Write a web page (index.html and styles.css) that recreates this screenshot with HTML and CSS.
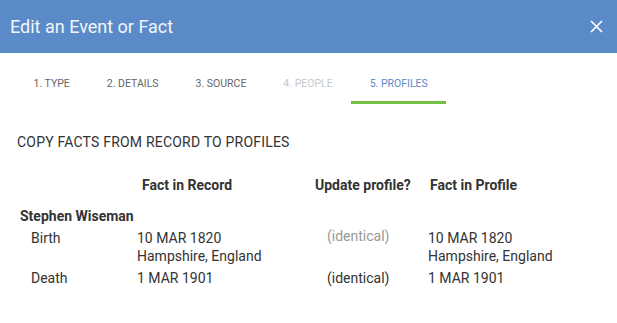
FILE: index.html
```html
<!DOCTYPE html>
<html lang="en">
  <head>
    <meta charset="UTF-8" />
    <meta name="viewport" content="width=device-width, initial-scale=1.0" />
    <title>Edit an Event or Fact</title>
    <link rel="stylesheet" href="styles.css">
  </head>
  <body>
    <div class="dialog">
      <div class="header">
        <h1>Edit an Event or Fact</h1>
        <button class="close" aria-label="Close">
          <svg width="13" height="13" viewBox="0 0 13 13">
            <path d="M1 1L12 12M12 1L1 12" stroke="#fff" stroke-width="1.7" fill="none" />
          </svg>
        </button>
      </div>

      <div class="tabs">
        <div class="tab">1. TYPE</div>
        <div class="tab">2. DETAILS</div>
        <div class="tab">3. SOURCE</div>
        <div class="tab disabled">4. PEOPLE</div>
        <div class="tab active">5. PROFILES</div>
      </div>

      <div class="content">
        <h2>COPY FACTS FROM RECORD TO PROFILES</h2>

        <div class="facts">
          <div class="row head">
            <div></div>
            <div class="col-record">Fact in Record</div>
            <div class="col-update">Update profile?</div>
            <div class="col-profile">Fact in Profile</div>
          </div>

          <div class="person">Stephen Wiseman</div>

          <div class="row fact">
            <div class="label">Birth</div>
            <div>10 MAR 1820<br />Hampshire, England</div>
            <div class="identical muted">(identical)</div>
            <div>10 MAR 1820<br />Hampshire, England</div>
          </div>

          <div class="row fact">
            <div class="label">Death</div>
            <div>1 MAR 1901</div>
            <div class="identical">(identical)</div>
            <div>1 MAR 1901</div>
          </div>
        </div>
      </div>
    </div>
  </body>
</html>
```

FILE: styles.css
```css
body {
  margin: 0;
  font-family: Roboto, "Noto Sans", sans-serif;
  color: #333;
  background-color: #fff;
}
.header {
  height: 53px;
  background-color: #5a8bc8;
  display: flex;
  align-items: center;
  justify-content: space-between;
  padding: 0 14px 0 10px;
}
.header h1 {
  margin: 0;
  font-size: 18px;
  font-weight: 400;
  color: #f2f6fb;
  line-height: 20px;
  padding-top: 1px;
}
.close {
  background: none;
  border: none;
  padding: 0;
  width: 13px;
  height: 13px;
  cursor: pointer;
  display: flex;
}
.tabs {
  display: flex;
  padding-left: 15px;
}
.tab {
  font-size: 10.5px;
  line-height: 13px;
  color: #666;
  padding: 24px 18.5px 11px;
  border-bottom: 3px solid transparent;
}
.tab.disabled {
  color: #c8c8c8;
}
.tab.active {
  color: #5a8bc8;
  border-bottom-color: #72bf44;
}
.content {
  padding: 0 17px;
}
h2 {
  font-size: 14px;
  font-weight: 400;
  line-height: 16px;
  letter-spacing: 0.2px;
  margin: 30px 0 0;
  color: #333;
}
.facts {
  margin-top: 27px;
  font-size: 14px;
}
.row {
  display: grid;
  grid-template-columns: 120px 178px 113px 1fr;
}
.head {
  font-weight: 700;
  line-height: 16px;
}
.col-record {
  padding-left: 5px;
}
.col-profile {
  padding-left: 2px;
}
.person {
  font-weight: 700;
  line-height: 16px;
  padding-left: 3px;
  margin-top: 15px;
}
.fact {
  line-height: 18px;
  margin-top: 5px;
}
.fact + .fact {
  margin-top: 4px;
}
.label {
  padding-left: 14px;
}
.identical {
  padding-left: 12px;
}
.identical.muted {
  color: #999;
  margin-top: -2px;
}
```
